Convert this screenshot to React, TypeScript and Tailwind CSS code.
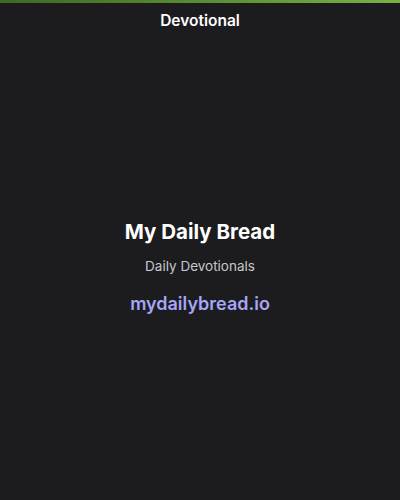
import React from 'react';

export default function App() {
  return (
    <div className="w-[400px] h-[500px] bg-[#1c1c1e] flex flex-col font-['Inter',sans-serif] text-white">
      {/* Top accent bar */}
      <div className="h-[3px] w-full bg-gradient-to-r from-[#3b6a22] to-[#79b244]" />

      {/* Header */}
      <div className="h-[36px] flex items-center justify-center">
        <h1 className="text-[15.5px] font-semibold leading-none">Devotional</h1>
      </div>

      {/* Content */}
      <div className="flex-1 flex flex-col items-center pt-[180px]">
        <h2 className="text-[20.5px] font-bold leading-[26px]">My Daily Bread</h2>
        <p className="mt-[12px] text-[13.5px] text-[#c7c7cc] leading-[18px]">Daily Devotionals</p>
        <p className="mt-[17px] text-[18px] font-semibold text-[#a5a6f6] leading-[24px]">mydailybread.io</p>
      </div>
    </div>
  );
}
